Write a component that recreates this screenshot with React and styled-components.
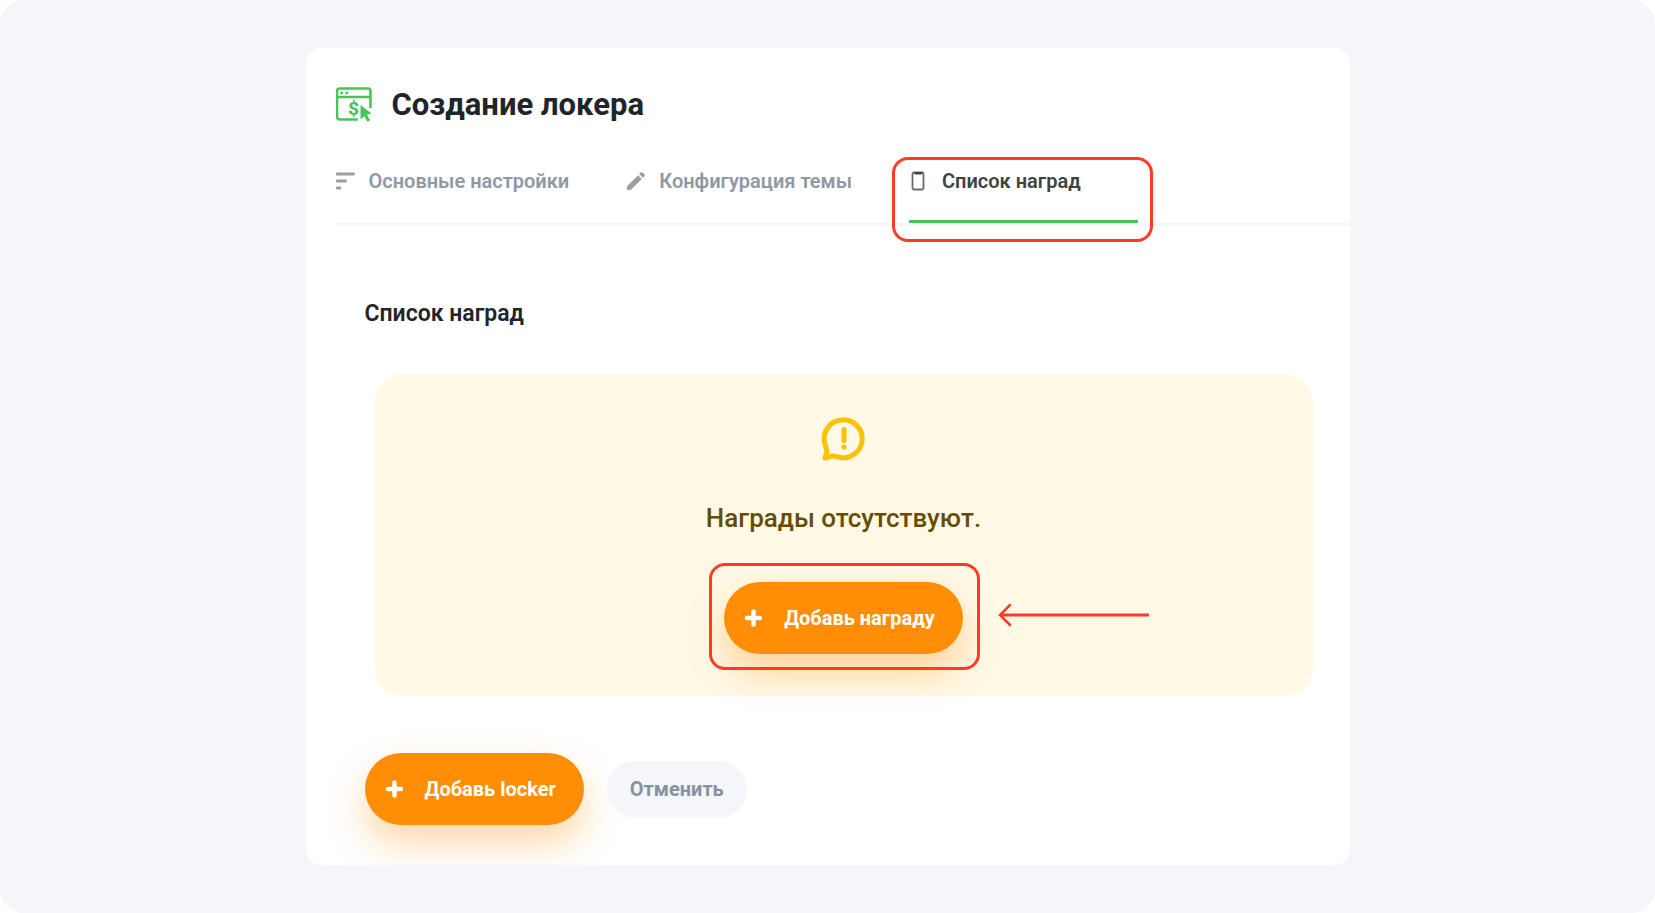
import React from "react";
import styled, { createGlobalStyle } from "styled-components";
import { MdEdit } from "react-icons/md";

const tabs = [
  { id: "main", label: "Основные настройки", icon: <ListIcon /> },
  { id: "theme", label: "Конфигурация темы", icon: <MdEdit size={24} /> },
  { id: "rewards", label: "Список наград", icon: <ClipboardIcon /> },
];

export default function App() {
  const activeTab = "rewards";

  return (
    <>
      <GlobalStyle />
      <Page>
        <Card>
          <Header>
            <LockerIcon />
            <h1>Создание локера</h1>
          </Header>
          <TabList role="tablist">
            {tabs.map((tab) => (
              <Tab
                key={tab.id}
                role="tab"
                aria-selected={tab.id === activeTab}
                $active={tab.id === activeTab}
              >
                <TabIcon>{tab.icon}</TabIcon>
                {tab.label}
                {tab.id === activeTab && <TabHighlight />}
              </Tab>
            ))}
          </TabList>
          <Content>
            <h2>Список наград</h2>
            <EmptyBox>
              <AlertIcon />
              <p>Награды отсутствуют.</p>
              <Callout>
                <PrimaryButton>
                  <PlusIcon />
                  Добавь награду
                </PrimaryButton>
                <ButtonHighlight />
                <Arrow />
              </Callout>
            </EmptyBox>
            <Actions>
              <PrimaryButton>
                <PlusIcon />
                Добавь locker
              </PrimaryButton>
              <CancelButton>Отменить</CancelButton>
            </Actions>
          </Content>
        </Card>
      </Page>
    </>
  );
}

function LockerIcon() {
  return (
    <svg width="38" height="36" viewBox="0 0 38 36" fill="none" aria-hidden="true">
      <path
        d="M22 32.5H3.5A2.5 2.5 0 0 1 1 30V4a2.5 2.500 0 0 1 2.500-2.500H32A2.500 2.500 0 0 1 34.500 4v17"
        stroke="#4ac35c"
        strokeWidth="2.600"
      />
      <path d="M1 10h34" stroke="#4ac35c" strokeWidth="2.400" />
      <path d="M4.500 6h2.600M9.500 6h2.600" stroke="#4ac35c" strokeWidth="2.400" />
      <text
        x="12"
        y="28"
        fill="#4ac35c"
        fontFamily="Roboto, sans-serif"
        fontSize="19"
        fontWeight="800"
      >
        $
      </text>
      <path
        d="M24.500 18l11 8.500-4.500 1.200 3.200 5.500-2.800 1.600-3.100-5.600-3.800 3.300z"
        fill="#4ac35c"
      />
    </svg>
  );
}

function ListIcon() {
  return (
    <svg width="20" height="20" viewBox="0 0 20 20" fill="none" aria-hidden="true">
      <path
        d="M1 3h16.500M1 10h8.500M1 17h3"
        stroke="#9e9e9e"
        strokeWidth="2.800"
        strokeLinecap="round"
      />
    </svg>
  );
}

function ClipboardIcon() {
  return (
    <svg width="20" height="20" viewBox="0 0 20 20" fill="none" aria-hidden="true">
      <rect x="3.500" y="1.500" width="11" height="17" rx="1.500" stroke="#6a6a6a" strokeWidth="1.800" />
      <path d="M4.500 1h9.500l-1.500 2.500H6z" fill="#444" />
    </svg>
  );
}

function PlusIcon() {
  return (
    <svg width="18" height="18" viewBox="0 0 18 18" fill="none" aria-hidden="true">
      <path
        d="M9.500 2.500v13M3 9h13"
        stroke="currentColor"
        strokeWidth="4.500"
        strokeLinecap="round"
      />
    </svg>
  );
}

function AlertIcon() {
  return (
    <svg width="52" height="52" viewBox="0 0 52 52" fill="none" aria-hidden="true">
      <path
        d="M7 46c2.500-5 2.500-8 .6-12A19 19 0 1 1 18 44.400c-3.500-1.300-5.500 0-11 1.600z"
        stroke="#ffc107"
        strokeWidth="5"
        strokeLinejoin="round"
      />
      <path d="M26 17.500v11" stroke="#ffc107" strokeWidth="5" strokeLinecap="round" />
      <circle cx="26" cy="35" r="2.600" fill="#ffc107" />
    </svg>
  );
}

function Arrow() {
  return (
    <ArrowSvg width="152" height="24" viewBox="0 0 152 24" fill="none" aria-hidden="true">
      <path d="M2 12h149" stroke="#ff3b24" strokeWidth="3" />
      <path d="M12 2L2 12l10 10" stroke="#ff3b24" strokeWidth="2.500" strokeLinecap="round" />
    </ArrowSvg>
  );
}

const GlobalStyle = createGlobalStyle`
  * {
    box-sizing: border-box;
  }
  body {
    margin: 0;
    background: #fff;
    font-family: Roboto, sans-serif;
    color: #212529;
  }
  h1, h2, p {
    margin: 0;
  }
  button {
    border: 0;
    font-family: inherit;
    cursor: pointer;
  }
`;

const Page = styled.main`
  min-height: 100vh;
  padding: 48px 16px;
  border-radius: 24px;
  background: #f4f6fa;
`;

const Card = styled.section`
  max-width: 1044px;
  margin: 0 auto;
  padding: 32px 0 40px 30px;
  border-radius: 16px;
  background: #fff;
  overflow: hidden;
`;

const Header = styled.header`
  display: flex;
  align-items: center;
  gap: 18px;
  h1 {
    font-size: 31px;
    font-weight: 700;
    line-height: 50px;
  }
`;

const TabList = styled.div`
  display: flex;
  margin-top: 30px;
  border-bottom: 3px solid #f4f6fa;
`;

const Tab = styled.button`
  position: relative;
  display: flex;
  align-items: center;
  gap: 13px;
  padding: 9px 57px 27px 0;
  border-bottom: 3px solid ${({ $active }) => ($active ? "#4ac35c" : "transparent")};
  background: none;
  color: ${({ $active }) => ($active ? "#3f4245" : "#8e99a4")};
  font-size: 20px;
  font-weight: 600;
  line-height: 24px;
  white-space: nowrap;
`;

const TabIcon = styled.span`
  display: flex;
  align-items: center;
  justify-content: center;
  width: 20px;
  height: 24px;
  color: #9e9e9e;
  svg {
    flex-shrink: 0;
  }
`;

const Highlight = styled.span`
  position: absolute;
  border: 3px solid #ff3b24;
  border-radius: 16px;
  pointer-events: none;
`;

const TabHighlight = styled(Highlight)`
  inset: -3px -15px -22px -17px;
`;

const ButtonHighlight = styled(Highlight)`
  inset: -19px -17px -16px -15px;
`;

const Content = styled.div`
  padding: 74px 37px 0 29px;
  h2 {
    font-size: 23px;
    font-weight: 600;
    line-height: 28px;
  }
`;

const EmptyBox = styled.div`
  display: flex;
  flex-direction: column;
  align-items: center;
  margin: 46px 0 0 10px;
  padding: 38px 16px 42px;
  border-radius: 28px;
  background: #fff9e6;
  p {
    margin: 38px 0 48px;
    color: #664d03;
    font-size: 26px;
    font-weight: 500;
    line-height: 32px;
  }
`;

const Callout = styled.div`
  position: relative;
`;

const ArrowSvg = styled.svg`
  position: absolute;
  top: 21px;
  left: calc(100% + 35px);
`;

const PrimaryButton = styled.button`
  display: flex;
  align-items: center;
  gap: 22px;
  height: 72px;
  padding: 0 28px 0 20px;
  border-radius: 36px;
  background: #ff8d05;
  box-shadow: 0 18px 36px rgba(255, 141, 5, 0.35);
  color: #fff;
  font-size: 20px;
  font-weight: 700;
  line-height: 24px;
`;

const CancelButton = styled.button`
  height: 57px;
  padding: 0 23px;
  border-radius: 28px;
  background: #f4f6fa;
  color: #8593a0;
  font-size: 20px;
  font-weight: 700;
  line-height: 24px;
`;

const Actions = styled.div`
  display: flex;
  align-items: center;
  gap: 23px;
  margin-top: 57px;
`;
